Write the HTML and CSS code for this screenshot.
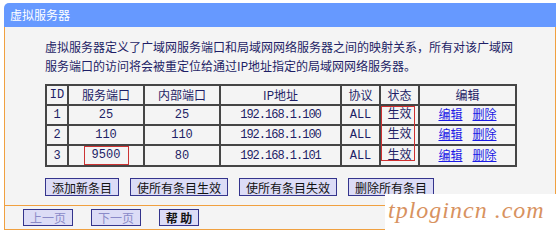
FILE: index.html
```html
<!DOCTYPE html>
<html lang="zh-CN">
<head>
<meta charset="utf-8">
<title>虚拟服务器</title>
<link rel="stylesheet" href="styles.css">
</head>
<body>
<div class="panel">
  <div class="title">虚拟服务器</div>
  <div class="content">
    <p class="desc">虚拟服务器定义了广域网服务端口和局域网网络服务器之间的映射关系，所有对该广域网服务端口的访问将会被重定位给通过IP地址指定的局域网网络服务器。</p>
    <div class="table-wrap">
      <table class="vs">
        <colgroup>
          <col class="c-id"><col class="c-port"><col class="c-port"><col class="c-ip"><col class="c-proto"><col class="c-state"><col class="c-edit">
        </colgroup>
        <tr>
          <th>ID</th><th>服务端口</th><th>内部端口</th><th>IP地址</th><th>协议</th><th>状态</th><th>编辑</th>
        </tr>
        <tr>
          <td>1</td><td>25</td><td>25</td><td class="ip">192.168.1.100</td><td>ALL</td><td>生效</td>
          <td class="edit"><a href="#">编辑</a><a href="#">删除</a></td>
        </tr>
        <tr>
          <td>2</td><td>110</td><td>110</td><td class="ip">192.168.1.100</td><td>ALL</td><td>生效</td>
          <td class="edit"><a href="#">编辑</a><a href="#">删除</a></td>
        </tr>
        <tr>
          <td>3</td><td><span class="mark-port">9500</span></td><td>80</td><td class="ip">192.168.1.101</td><td>ALL</td><td>生效</td>
          <td class="edit"><a href="#">编辑</a><a href="#">删除</a></td>
        </tr>
      </table>
      <div class="mark-status"></div>
    </div>
    <div class="actions">
      <button class="btn">添加新条目</button>
      <button class="btn">使所有条目生效</button>
      <button class="btn">使所有条目失效</button>
      <button class="btn">删除所有条目</button>
    </div>
  </div>
  <div class="footer">
    <button class="btn small" disabled>上一页</button>
    <button class="btn small" disabled>下一页</button>
    <button class="btn small help">帮 助</button>
  </div>
</div>
<div class="watermark">tplogincn .com</div>
</body>
</html>
```

FILE: styles.css
```css
html, body {
  margin: 0;
  padding: 0;
  background: #ffffff;
}

body {
  font-family: "Noto Sans CJK SC", "Noto Sans", sans-serif;
  font-size: 12px;
  color: #1e1e66;
  position: relative;
  width: 560px;
  height: 234px;
  overflow: hidden;
}

.panel {
  margin: 3px 0 0 4px;
  width: 552px;
}

.title {
  height: 24px;
  line-height: 24px;
  background: #6699ff;
  color: #ffffff;
  padding-left: 6px;
  border-top-left-radius: 5px;
  font-size: 12px;
}

.content {
  background: #f4f4f4;
  border-left: 1px solid #f0a040;
  border-right: 1px solid #f0a040;
  border-bottom: 1px solid #f0a040;
  padding: 10px 0 9px 40px;
}

.desc {
  margin: 0;
  width: 470px;
  line-height: 19px;
}

.table-wrap {
  position: relative;
  margin-top: 9px;
  width: 470px;
}

.vs {
  border-collapse: collapse;
  width: 470px;
  table-layout: fixed;
  font-family: "Liberation Mono", "Noto Sans CJK SC", monospace;
  font-size: 12px;
  color: #1e1e66;
}

.c-id { width: 22px; }
.c-port { width: 76px; }
.c-ip { width: 121px; }
.c-proto { width: 39px; }
.c-state { width: 39px; }
.c-edit { width: 97px; }

.vs th,
.vs td {
  border: 2px solid #454545;
  height: 18px;
  padding: 0;
  line-height: 16px;
  text-align: center;
  font-weight: normal;
}

.vs th {
  font-family: "Noto Sans CJK SC", "Liberation Mono", sans-serif;
}

.vs th:first-child {
  font-family: "Liberation Mono", monospace;
}

.vs td.ip {
  letter-spacing: -1px;
}

.edit a {
  color: #1a1ae6;
  text-decoration: underline;
  font-family: "Noto Sans CJK SC", sans-serif;
  margin: 0 5px;
}

.mark-port {
  display: inline-block;
  box-sizing: border-box;
  width: 45px;
  height: 19px;
  line-height: 17px;
  border: 1px solid #cc3333;
  margin-left: 0;
}

.mark-status {
  position: absolute;
  left: 336px;
  top: 22px;
  width: 34px;
  height: 55px;
  border: 1px solid #d03030;
  box-sizing: border-box;
}

.actions {
  display: flex;
  gap: 11px;
  margin-top: 11px;
}

.btn {
  box-sizing: border-box;
  height: 18px;
  padding: 0 6px;
  border: 1px solid #34348c;
  background: #dcdcf6;
  color: #111111;
  font-family: "Noto Sans CJK SC", sans-serif;
  font-size: 12px;
  line-height: 15px;
  border-radius: 0;
}

.btn[disabled] {
  color: #8a8ac8;
}

.footer {
  display: flex;
  gap: 18px;
  border-left: 1px solid #f0a040;
  border-right: 1px solid #f0a040;
  border-bottom: 1px solid #f0a040;
  background: #f4f4f4;
  padding: 3px 0 3px 18px;
}

.btn.small {
  height: 17px;
  width: 50px;
  padding: 0;
}

.btn.help {
  width: 40px;
  font-weight: bold;
}

.watermark {
  position: absolute;
  left: 385px;
  top: 194px;
  width: 175px;
  height: 40px;
  background: #ffffff;
  font-family: "Liberation Serif", serif;
  font-style: italic;
  font-size: 24px;
  letter-spacing: 1px;
  color: #d8925f;
  padding-left: 3px;
  line-height: 32px;
  box-sizing: border-box;
}
```
